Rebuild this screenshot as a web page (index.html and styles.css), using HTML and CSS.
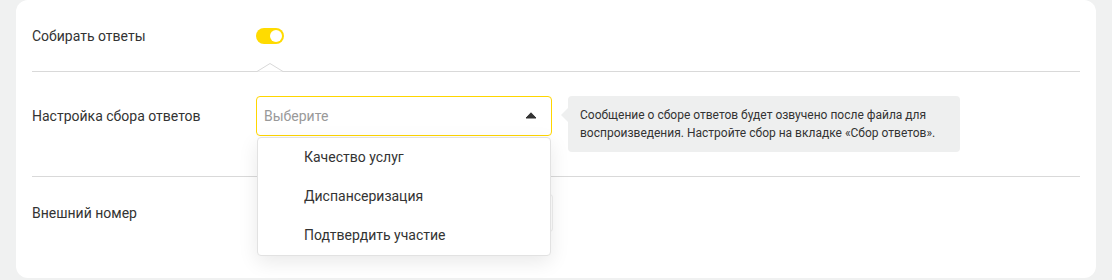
FILE: index.html
```html
<!DOCTYPE html>
<html lang="ru">
<head>
<meta charset="utf-8">
<link rel="stylesheet" href="styles.css">
</head>
<body>
<div class="card">
  <div class="row row-toggle">
    <div class="label">Собирать ответы</div>
    <div class="control">
      <span class="toggle"><span class="knob"></span></span>
    </div>
    <svg class="notch" width="26" height="9" viewBox="0 0 26 9"><polyline points="0,8.5 13,0.5 26,8.5" fill="#fff" stroke="#d9d9d9" stroke-width="1"/></svg>
  </div>
  <div class="row row-select">
    <div class="label">Настройка сбора ответов</div>
    <div class="control control-inline">
      <div class="select-wrap">
        <div class="select">
          <span class="placeholder">Выберите</span>
          <svg class="caret" width="12" height="7" viewBox="0 0 12 7"><path d="M6 0.8 L11 6 L1 6 Z" fill="#333" stroke="#333" stroke-width="1" stroke-linejoin="round"/></svg>
        </div>
        <ul class="menu">
          <li>Качество услуг</li>
          <li>Диспансеризация</li>
          <li>Подтвердить участие</li>
        </ul>
      </div>
      <div class="hint">Сообщение о сборе ответов будет озвучено после файла для воспроизведения. Настройте сбор на вкладке «Сбор ответов».</div>
    </div>
  </div>
  <div class="row row-last">
    <div class="label">Внешний номер</div>
    <div class="control">
      <div class="input"></div>
    </div>
  </div>
</div>
</body>
</html>
```

FILE: styles.css
```css
* { box-sizing: border-box; }
html, body { margin: 0; padding: 0; }
body {
  background: #f0f1f1;
  font-family: Roboto, "Noto Sans", Arial, sans-serif;
  color: #333;
  font-size: 14px;
  width: 1112px;
  height: 280px;
  overflow: hidden;
}
.card {
  margin: 0 16px;
  background: #fff;
  border-radius: 12px;
  padding: 0 16px;
  height: 278px;
}
.row {
  display: grid;
  grid-template-columns: 224px 1fr;
  position: relative;
  border-bottom: 1px solid #d9d9d9;
}
.row-last { border-bottom: none; }
.label { line-height: 20px; }
.row-toggle {
  height: 72px;
  align-items: center;
  padding-bottom: 1px;
}
.row-toggle .label { padding-top: 1px; }
.toggle {
  display: flex;
  justify-content: flex-end;
  align-items: center;
  width: 28px;
  height: 16px;
  border-radius: 8px;
  background: #ffdb00;
  padding: 0 2px;
  margin-top: 1px;
}
.knob {
  width: 12px;
  height: 12px;
  border-radius: 50%;
  background: #fff;
}
.notch {
  position: absolute;
  left: 225px;
  bottom: -1px;
  display: block;
}
.row-select {
  padding: 24px 0 24px;
  align-items: start;
}
.row-select .label { padding-top: 10px; }
.control-inline {
  display: flex;
  align-items: flex-start;
  gap: 16px;
}
.select-wrap {
  position: relative;
  width: 296px;
  flex: none;
}
.select {
  height: 40px;
  border: 1px solid #ffd600;
  border-radius: 4px;
  display: flex;
  align-items: center;
  justify-content: space-between;
  padding: 0 14px 0 7px;
}
.placeholder { color: #999; }
.caret { display: block; margin-top: -1px; }
.menu {
  position: absolute;
  top: 41px;
  left: 1px;
  right: 1px;
  margin: 0;
  padding: 0;
  list-style: none;
  background: #fff;
  border: 1px solid #e2e2e2;
  border-radius: 4px;
  box-shadow: 0 6px 20px rgba(0, 0, 0, 0.09);
  z-index: 5;
}
.menu li {
  height: 39px;
  line-height: 39px;
  padding-left: 46px;
}
.hint {
  position: relative;
  width: 392px;
  background: #eeefef;
  border-radius: 4px;
  padding: 10px 12px 10px;
  font-size: 12px;
  line-height: 18px;
  color: #333;
}
.hint::before {
  content: "";
  position: absolute;
  left: -7px;
  top: 12px;
  border-top: 7px solid transparent;
  border-bottom: 7px solid transparent;
  border-right: 7px solid #eeefef;
}
.row-last {
  padding: 17px 0;
  align-items: center;
}
.input {
  width: 297px;
  height: 38px;
  border: 1px solid #efefef;
  border-left-color: transparent;
  border-radius: 4px;
}
```
